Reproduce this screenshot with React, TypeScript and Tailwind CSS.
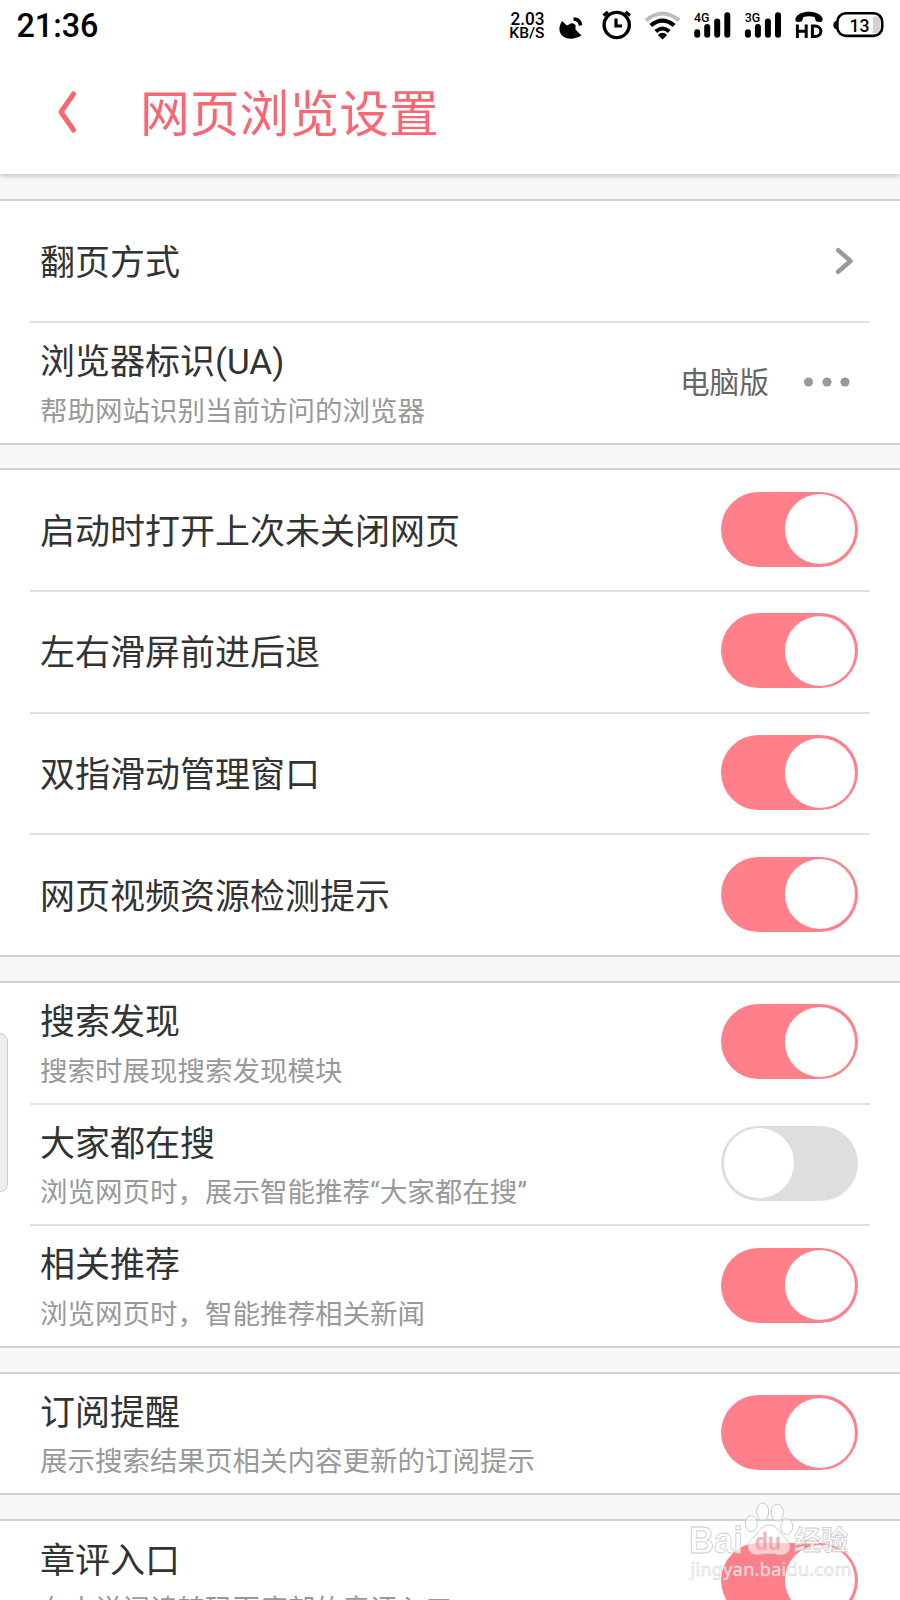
type Item = {
  title: string;
  desc?: string;
  on?: boolean;
  kind?: 'link' | 'select';
};

const groups: Item[][] = [
  [
    { title: '翻页方式', kind: 'link' },
    { title: '浏览器标识(UA)', desc: '帮助网站识别当前访问的浏览器', kind: 'select' },
  ],
  [
    { title: '启动时打开上次未关闭网页', on: true },
    { title: '左右滑屏前进后退', on: true },
    { title: '双指滑动管理窗口', on: true },
    { title: '网页视频资源检测提示', on: true },
  ],
  [
    { title: '搜索发现', desc: '搜索时展现搜索发现模块', on: true },
    { title: '大家都在搜', desc: '浏览网页时，展示智能推荐“大家都在搜”', on: false },
    { title: '相关推荐', desc: '浏览网页时，智能推荐相关新闻', on: true },
  ],
  [{ title: '订阅提醒', desc: '展示搜索结果页相关内容更新的订阅提示', on: true }],
  [{ title: '章评入口', desc: '在小说阅读转码页底部的章评入口', on: true }],
];

function Signal({ label }: { label: string }) {
  return (
    <>
      <text x="0" y="10.8" fontSize="13.5" fontWeight="500" fontFamily="Roboto" textLength="15.5" lengthAdjust="spacingAndGlyphs">
        {label}
      </text>
      <path d="M3.2 21.2v2.6M13.2 16v7.8M23.2 10.5v13.3M33.3 4.2v19.6" stroke="#000" strokeWidth="6" strokeLinecap="round" />
    </>
  );
}

function StatusBar() {
  return (
    <div className="flex h-[50px] items-center pl-[16.5px]">
      <span className="w-[491.5px] pt-[2px] text-[32.3px] leading-none font-medium text-black">21:36</span>
      <svg width="392" height="50" viewBox="508 0 392 50">
        <g fontFamily="Roboto" fontWeight="500">
          <text x="510.5" y="24.8" fontSize="17.7" textLength="34" lengthAdjust="spacingAndGlyphs">2.03</text>
          <text x="509.3" y="38.2" fontSize="14.5" textLength="35.2" lengthAdjust="spacingAndGlyphs">KB/S</text>
        </g>
        {/* satellite dish */}
        <path d="M562 21C557.5 28 559 35.5 566 38C571 39.5 577 38.5 581.5 35.5L575.5 29.5L575.5 25Q572.5 22 569 24.5L567 25.5Z" />
        <path d="M573.5 19Q580 19 580.5 25.5" fill="none" stroke="#000" strokeWidth="3.6" />
        {/* alarm clock */}
        <g fill="none" stroke="#000">
          <circle cx="616.7" cy="25" r="12.6" strokeWidth="3.4" />
          <path d="M616 18.5V26H622" strokeWidth="3.2" />
          <path d="M603.5 15.5L608 11.8M630 15.5L625.5 11.8" strokeWidth="3" />
        </g>
        {/* wifi */}
        <g fill="none" strokeWidth="4">
          <path d="M646 20.5Q662.5 6.5 679 20.5" stroke="#bdbdbd" />
          <path d="M650.8 25.6Q662.5 15.6 674.2 25.6" stroke="#000" />
          <path d="M655.8 31.5Q662.5 25.5 669.2 31.5" stroke="#000" />
        </g>
        <path d="M662.5 39.5L657.8 35Q662.5 30.5 667.2 35Z" />
        <g transform="translate(694 11)"><Signal label="4G" /></g>
        <g transform="translate(744.7 11)"><Signal label="3G" /></g>
        {/* HD voice */}
        <path d="M798 22C795.5 22 795 20 795.5 18.5C798 9.5 820 9.5 822.5 18.5C823 20 822.5 22 820 22L816.5 21.5C815.2 21 815.2 17.5 814.5 17Q809 15.3 803.5 17C802.8 17.5 802.8 21 801.5 21.5Z" />
        <path d="M797.4 24.5V38M806.2 24.5V38M797.4 31.2H806.2M812.4 26.1V36.5H815C822.8 36.5 822.8 26.1 815 26.1Z" fill="none" stroke="#000" strokeWidth="3" />
        {/* battery */}
        <path d="M872.8 16.5H877Q880 16.5 880 20V29.5Q880 33 877 33H872.8Z" fill="#d2d2d2" />
        <rect x="837.4" y="13.3" width="44.8" height="22.6" rx="8.5" fill="none" stroke="#000" strokeWidth="2.6" />
        <path d="M837.5 20.5Q833.3 21 833.3 25Q833.3 29 837.5 29.5Z" />
        <text x="849.5" y="31.8" fontSize="18.5" fontWeight="500" fontFamily="Roboto" textLength="20" lengthAdjust="spacingAndGlyphs">13</text>
      </svg>
    </div>
  );
}

function Toggle({ on }: { on?: boolean }) {
  return (
    <div
      className={
        on
          ? 'mb-[2px] flex h-[75px] w-[137.5px] items-center justify-end rounded-full bg-[#ff808b] px-[3.5px]'
          : 'mb-[2px] flex h-[75px] w-[137.5px] items-center rounded-full bg-[#dedede] px-[3.5px]'
      }
    >
      <div className="size-[70px] rounded-full bg-white" />
    </div>
  );
}

function Trailing({ item }: { item: Item }) {
  if (item.kind === 'link') {
    return (
      <svg width="20" height="30" viewBox="0 0 20 30" className="mr-[4px]" fill="none" stroke="#999" strokeWidth="4.5" strokeLinecap="round" strokeLinejoin="round">
        <path d="M4.2 4.2L16.5 15L4.2 25.8" />
      </svg>
    );
  }
  if (item.kind === 'select') {
    return (
      <div className="mr-[7px] mb-[1px] flex items-center">
        <span className="mr-[34px] pt-[2px] text-[29.7px] leading-none text-[#666]">电脑版</span>
        <svg width="48" height="10" viewBox="0 0 48 10" fill="#999">
          <circle cx="5.5" cy="5" r="4.6" />
          <circle cx="24" cy="5" r="4.6" />
          <circle cx="42" cy="5" r="4.6" />
        </svg>
      </div>
    );
  }
  return <Toggle on={item.on} />;
}

function Row({ item }: { item: Item }) {
  return (
    <div className="mx-[30px] flex h-[121.67px] items-center justify-between border-t-2 border-[#e0e0e0] pr-[12px] pl-[10px] first:h-[119.67px] first:border-t-0">
      <div className={item.desc ? 'pt-[7.3px] whitespace-nowrap' : 'pt-[5px] whitespace-nowrap'}>
        <div className="text-[35px] leading-[48px] text-[#333]">{item.title}</div>
        {item.desc && <div className="mt-[2.5px] text-[27.5px] leading-[44px] text-[#999]">{item.desc}</div>}
      </div>
      <Trailing item={item} />
    </div>
  );
}

function Watermark() {
  return (
    <svg className="absolute top-[1498px] left-[686px]" width="170" height="90" viewBox="0 0 170 90">
      <g fill="#fff" fillOpacity="0.6" stroke="#ccc" strokeWidth="1">
        <ellipse cx="65.3" cy="25.7" rx="6" ry="8" />
        <ellipse cx="76.7" cy="13.7" rx="6" ry="8.8" />
        <ellipse cx="91.3" cy="14.7" rx="6" ry="8.5" />
        <ellipse cx="100.7" cy="28.7" rx="6" ry="8" />
        <path d="M83 27C75 27 73 35 67 40C59 47 62 57 72 56.5C79 55 87 55 94 56.5C104 57 107 48 100 41C93 35 92 27 83 27Z" />
      </g>
      <g fill="#fff" fillOpacity="0.75" stroke="#ccc" strokeWidth="0.8" fontFamily="Liberation Sans">
        <text x="3" y="55" fontSize="36" fontWeight="700" textLength="54" lengthAdjust="spacingAndGlyphs">Bai</text>
        <text x="108" y="51.5" fontSize="27" fontWeight="700" fontFamily="Noto Sans CJK SC">经验</text>
        <text x="4.5" y="77.5" fontSize="18" fontFamily="Noto Sans" strokeWidth="0.5" textLength="161">jingyan.baidu.com</text>
      </g>
      <text x="69" y="52" fontSize="23" fontWeight="700" fontFamily="Liberation Sans" fill="#ff808b" fillOpacity="0.65" stroke="#ccc" strokeWidth="0.5" textLength="26" lengthAdjust="spacingAndGlyphs">du</text>
    </svg>
  );
}

export default function App() {
  return (
    <div className="relative h-[1600px] w-[900px] overflow-hidden bg-[#f8f8f8] font-[Roboto,'Noto_Sans_CJK_SC',sans-serif]">
      <header className="relative h-[174px] bg-white shadow-[0_1px_6px_rgba(0,0,0,0.3)]">
        <StatusBar />
        <div className="flex h-[124px] items-center pl-[55.5px]">
          <svg width="22" height="44" viewBox="0 0 22 44" fill="none" stroke="#f76774" strokeWidth="5" strokeLinecap="round" strokeLinejoin="round">
            <path d="M17.5 4L5 22L17.5 40" />
          </svg>
          <h1 className="ml-[62.5px] pt-[8px] text-[49.8px] leading-none text-[#f76774]">网页浏览设置</h1>
        </div>
      </header>

      <main className="flex flex-col gap-[23.9px] pt-[25.2px]">
        {groups.map((group, i) => (
          <section key={i} className="border-y-2 border-[#d0d0d0] bg-white">
            {group.map((item) => (
              <Row key={item.title} item={item} />
            ))}
          </section>
        ))}
      </main>

      <div className="absolute top-[1033px] left-[-10px] h-[159px] w-[18px] rounded-[8px] border border-[#ccc] bg-[#eee]" />
      <Watermark />
    </div>
  );
}
